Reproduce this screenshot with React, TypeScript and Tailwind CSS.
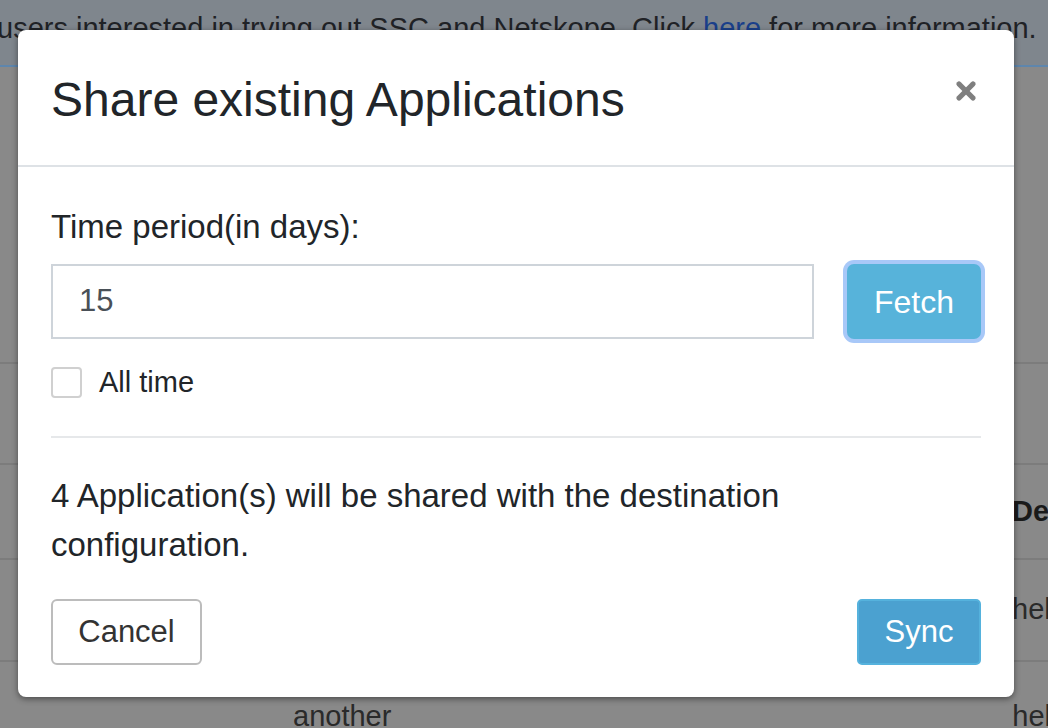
import { X } from 'lucide-react';

export default function App() {
  return (
    <div className="relative w-[1048px] h-[728px] overflow-hidden bg-[#898989] font-['Liberation_Sans',Arial,sans-serif] text-[#212529]">
      {/* Banner behind the overlay */}
      <div className="h-[67px] bg-[#7f868d] border-b-2 border-[#5e86ad] pt-[10px] whitespace-nowrap text-[29px] leading-[36px] text-[#1f2226]">
        <span className="-ml-[3px]">
          users interested in trying out SSC and Netskope. Click <span className="text-[#1a3f8a]">here</span> for more information.
        </span>
      </div>

      {/* Page table behind the overlay */}
      <div className="text-[29px] text-[#2a2a2a]">
        <div className="h-[295px]" />
        <div className="h-[101px] border-t-2 border-[#7c7c7c]" />
        <div className="h-[95px] border-t-2 border-[#7c7c7c] flex items-center pl-[1012px] font-bold text-[#1a1a1a] whitespace-nowrap">Des</div>
        <div className="h-[102px] border-t-2 border-[#7c7c7c] flex items-center pl-[1012px] whitespace-nowrap">hel</div>
        <div className="h-[70px] border-t-2 border-[#7c7c7c] flex items-start pt-[33px] whitespace-nowrap">
          <span className="ml-[293px]">another</span>
          <span className="ml-[621px]">hel</span>
        </div>
      </div>

      {/* Modal */}
      <div className="absolute left-[18px] top-[30px] w-[996px] h-[667px] bg-white rounded-[8px] shadow-[0_2px_6px_rgba(0,0,0,0.45)]">
        <div className="h-[137px] border-b-2 border-[#dee2e6] flex items-center justify-between pl-[33px] pr-[34px]">
          <h4 className="text-[48px] leading-none text-[#212529] mt-[4px] whitespace-nowrap">Share existing Applications</h4>
          <X className="w-[28px] h-[28px] text-[#7f7f7f] -mt-[14px]" strokeWidth={4.5} />
        </div>

        <div className="px-[33px] pt-[42px] text-[33px]">
          <div className="leading-[36px]">Time period(in days):</div>

          <div className="flex items-center mt-[19px]">
            <div className="flex-1 h-[75px] border-2 border-[#ced4da] flex items-center pl-[26px] text-[31px] text-[#495057]">15</div>
            <button className="ml-[33px] w-[134px] h-[75px] rounded-[7px] bg-[#57b3da] text-white text-[32px] shadow-[0_0_0_4px_#a8c8f8]">
              Fetch
            </button>
          </div>

          <div className="flex items-center mt-[27px]">
            <div className="w-[31px] h-[31px] rounded-[4px] border-2 border-[#d0d0d0] bg-white" />
            <span className="ml-[17px] leading-[32px] text-[29px]">All time</span>
          </div>

          <div className="mt-[38px] border-t-2 border-[#e6e8ea]" />

          <p className="mt-[33px] leading-[49px] text-[#212529]">
            4 Application(s) will be shared with the destination
            <br />
            configuration.
          </p>

          <div className="flex items-center justify-between mt-[30px]">
            <button className="w-[151px] h-[66px] rounded-[6px] border-2 border-[#bcbcbc] bg-white text-[#333] text-[31px]">
              Cancel
            </button>
            <button className="w-[124px] h-[66px] rounded-[5px] border-2 border-[#55b2dd] bg-[#4ba1d0] text-white text-[31px]">
              Sync
            </button>
          </div>
        </div>
      </div>
    </div>
  );
}
